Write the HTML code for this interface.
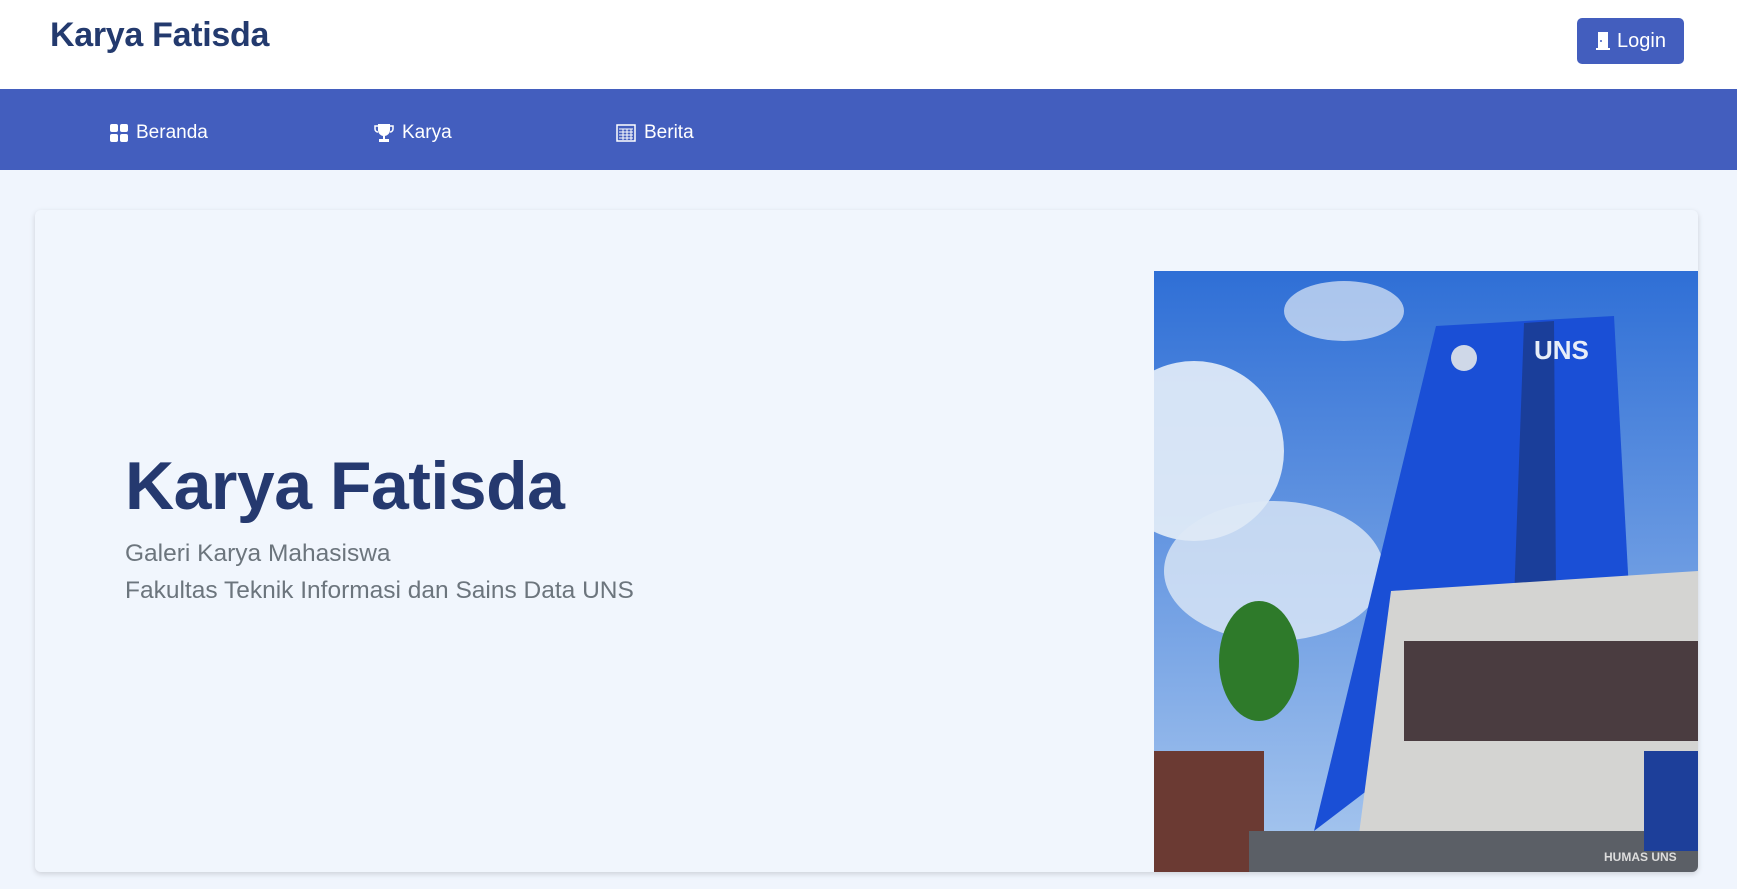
<!DOCTYPE html>
<html><head><meta charset="utf-8"><style>
*{margin:0;padding:0;box-sizing:border-box}
body{width:1737px;height:889px;overflow:hidden;background:#f0f5fd;font-family:"Liberation Sans",sans-serif}
.top{height:89px;background:#fff;position:relative}
.brand{position:absolute;left:50px;top:16px;font-size:34px;font-weight:bold;color:#233a6e;letter-spacing:-0.3px}
.login{position:absolute;left:1577px;top:18px;width:107px;height:46px;background:#435ebe;border-radius:5px;color:#fff;font-size:20px;display:flex;align-items:center;justify-content:center;gap:6px}
.nav{height:81px;background:#435ebe;position:relative;color:#fff;font-size:19px}
.nav span{position:absolute;top:33px;display:flex;align-items:center;gap:8px}
.card{position:absolute;left:35px;top:210px;width:1663px;height:662px;background:#f1f6fd;border-radius:6px;box-shadow:0 2px 6px rgba(0,0,0,.15);overflow:hidden}
h1{position:absolute;left:90px;top:237px;font-size:68px;color:#25396f;font-weight:bold;letter-spacing:-0.5px}
.sub{position:absolute;left:90px;top:325px;font-size:24.5px;color:#6c757d;line-height:37px}
.img{position:absolute;left:1119px;top:61px;width:544px;height:601px}
</style></head><body>
<div class="top"><div class="brand">Karya Fatisda</div>
<div class="login"><svg width="16" height="20" viewBox="0 0 16 20"><rect x="3" y="1" width="10" height="17" fill="#fff"/><rect x="1" y="17" width="14" height="2" fill="#fff"/><circle cx="6" cy="10" r="1" fill="#435ebe"/></svg>Login</div></div>
<div class="nav">
<span style="left:110px"><svg width="18" height="18"><rect x="0" y="0" width="8" height="8" rx="2" fill="#fff"/><rect x="10" y="0" width="8" height="8" rx="2" fill="#fff"/><rect x="0" y="10" width="8" height="8" rx="2" fill="#fff"/><rect x="10" y="10" width="8" height="8" rx="2" fill="#fff"/></svg>Beranda</span>
<span style="left:374px"><svg width="20" height="20" viewBox="0 0 20 20"><path d="M4 1h12v6a6 6 0 0 1-12 0z" fill="#fff"/><path d="M4 3H1v3a3 3 0 0 0 3 3M16 3h3v3a3 3 0 0 1-3 3" stroke="#fff" stroke-width="1.5" fill="none"/><rect x="9" y="12" width="2" height="4" fill="#fff"/><rect x="5" y="16" width="10" height="3" fill="#fff"/></svg>Karya</span>
<span style="left:616px"><svg width="20" height="20" viewBox="0 0 20 20"><rect x="1" y="2" width="18" height="16" fill="none" stroke="#fff" stroke-width="1.5"/><path d="M3 6h14M3 9h14M3 12h14M3 15h14M7 6v11M11 6v11M15 6v11" stroke="#fff" stroke-width="1"/></svg>Berita</span>
</div>
<div class="card">
<h1>Karya Fatisda</h1>
<div class="sub">Galeri Karya Mahasiswa<br>Fakultas Teknik Informasi dan Sains Data UNS</div>
<svg class="img" viewBox="0 0 544 601" preserveAspectRatio="none">
<defs><linearGradient id="s" x1="0" y1="0" x2="0" y2="1"><stop offset="0" stop-color="#2f6fd6"/><stop offset="1" stop-color="#a9c8ef"/></linearGradient></defs>
<rect width="544" height="601" fill="url(#s)"/>
<ellipse cx="40" cy="180" rx="90" ry="90" fill="#e6eef8" opacity=".9"/>
<ellipse cx="120" cy="300" rx="110" ry="70" fill="#dde8f6" opacity=".8"/>
<ellipse cx="190" cy="40" rx="60" ry="30" fill="#dfe9f6" opacity=".7"/>
<polygon points="282,55 460,45 475,320 160,560" fill="#1a4fd6"/>
<polygon points="370,52 400,50 402,320 360,330" fill="#1a3e9a"/>
<text x="380" y="88" font-family="Liberation Sans" font-weight="bold" font-size="26" fill="#e8eef8">UNS</text>
<circle cx="310" cy="87" r="13" fill="#cfd8e8"/>
<polygon points="237,320 544,300 544,601 200,601" fill="#d4d4d2"/>
<rect x="250" y="370" width="294" height="100" fill="#4a3c40"/>
<rect x="0" y="480" width="110" height="121" fill="#6b3a33"/>
<rect x="95" y="560" width="449" height="41" fill="#5b5f66"/>
<ellipse cx="105" cy="390" rx="40" ry="60" fill="#2e7a2a"/>
<rect x="490" y="480" width="54" height="100" fill="#1d3f9a"/>
<text x="450" y="590" font-family="Liberation Sans" font-weight="bold" font-size="12" fill="#ddd">HUMAS UNS</text>
</svg>
</div>
</body></html>
